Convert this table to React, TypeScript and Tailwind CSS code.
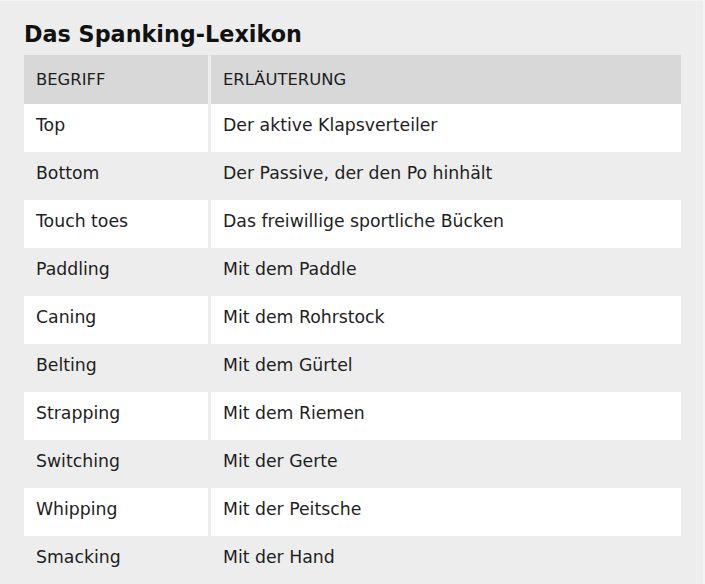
import React from "react";

const rows: [string, string][] = [
  ["Top", "Der aktive Klapsverteiler"],
  ["Bottom", "Der Passive, der den Po hinhält"],
  ["Touch toes", "Das freiwillige sportliche Bücken"],
  ["Paddling", "Mit dem Paddle"],
  ["Caning", "Mit dem Rohrstock"],
  ["Belting", "Mit dem Gürtel"],
  ["Strapping", "Mit dem Riemen"],
  ["Switching", "Mit der Gerte"],
  ["Whipping", "Mit der Peitsche"],
  ["Smacking", "Mit der Hand"],
];

export default function App() {
  return (
    <div
      className="w-[705px] h-[584px] overflow-hidden bg-[#ededed] border-t border-r-2 border-[#f4f4f4] text-[#1e1e1e]"
      style={{ fontFamily: '"DejaVu Sans", sans-serif' }}
    >
      <div className="pl-[24px] pr-[22px]">
        <h2 className="pt-[18px] h-[54px] text-[22.3px] leading-[30px] font-bold text-[#111]">
          Das Spanking-Lexikon
        </h2>
        <div className="grid grid-cols-[184px_470px] gap-x-[3px]">
          <div className="h-[49px] bg-[#d8d8d8] pl-[12px] pt-[2px] flex items-center text-[16.4px] uppercase">
            Begriff
          </div>
          <div className="h-[49px] bg-[#d8d8d8] pl-[12px] pt-[2px] flex items-center text-[16.4px] uppercase">
            Erläuterung
          </div>
          {rows.map(([a, b], i) => (
            <React.Fragment key={a}>
              <div
                className={`h-[48px] pl-[12px] pb-[4px] flex items-center text-[17.3px] ${
                  i % 2 === 0 ? "bg-white" : "bg-[#ededed]"
                }`}
              >
                {a}
              </div>
              <div
                className={`h-[48px] pl-[12px] pb-[4px] flex items-center text-[17.3px] ${
                  i % 2 === 0 ? "bg-white" : "bg-[#ededed]"
                }`}
              >
                {b}
              </div>
            </React.Fragment>
          ))}
        </div>
      </div>
    </div>
  );
}
